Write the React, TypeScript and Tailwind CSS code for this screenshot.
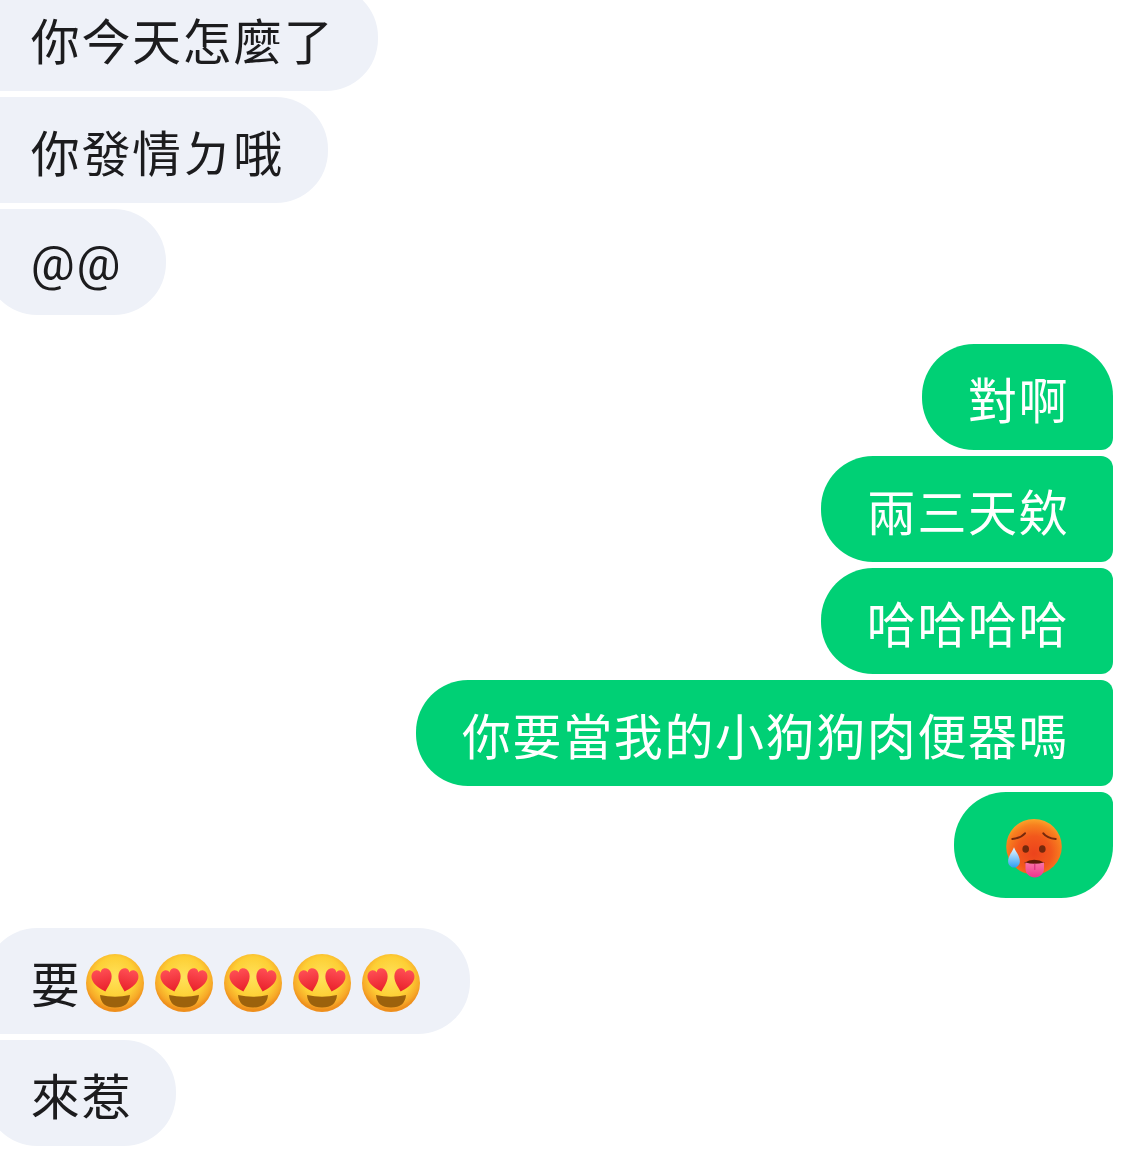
const HEART =
  "M0 10.500C-3 7.500-9 2.500-9-3.500C-9-7.500-6.200-9.800-3.500-9.800C-2-9.800-.5-8.800 0-6.800C.5-8.800 2-9.800 3.500-9.800C6.200-9.800 9-7.500 9-3.500C9 2.500 3 7.500 0 10.500Z";

const HeartEyes = ({ id }: { id: string }) => (
  <svg viewBox="0 0 60 60" className="w-[60px] h-[60px] shrink-0 -mt-[8px] -ml-[2px]">
    <defs>
      <radialGradient id={`face-${id}`} cx="50%" cy="40%" r="56%">
        <stop offset="0%" stopColor="#ffe25a" />
        <stop offset="62%" stopColor="#fdcf35" />
        <stop offset="88%" stopColor="#f7a928" />
        <stop offset="100%" stopColor="#ee8f1c" />
      </radialGradient>
      <linearGradient id={`heart-${id}`} x1="0" y1="0" x2="0" y2="1">
        <stop offset="0%" stopColor="#ff4f55" />
        <stop offset="100%" stopColor="#e8202a" />
      </linearGradient>
    </defs>
    <circle cx="30" cy="30" r="29" fill={`url(#face-${id})`} />
    <path d={HEART} transform="translate(17.500 27) rotate(-14) scale(1.120)" fill={`url(#heart-${id})`} />
    <path d={HEART} transform="translate(42.500 27) rotate(14) scale(1.120)" fill={`url(#heart-${id})`} />
    <path d="M15 42Q30 45.500 45 42Q44 54.500 30 54.500Q16 54.500 15 42Z" fill="#9c620c" />
  </svg>
);

const HotFace = () => (
  <svg viewBox="0 0 60 60" className="w-[60px] h-[60px] shrink-0 -mt-[5px] -ml-[2px]">
    <defs>
      <radialGradient id="hot-face" cx="50%" cy="62%" r="62%">
        <stop offset="0%" stopColor="#ec431c" />
        <stop offset="50%" stopColor="#f2581c" />
        <stop offset="82%" stopColor="#f7801f" />
        <stop offset="100%" stopColor="#fba42a" />
      </radialGradient>
      <linearGradient id="hot-drop" x1="0" y1="0" x2="0" y2="1">
        <stop offset="0%" stopColor="#eefaff" />
        <stop offset="100%" stopColor="#2f9df2" />
      </linearGradient>
      <linearGradient id="hot-tongue" x1="0" y1="0" x2="0" y2="1">
        <stop offset="0%" stopColor="#f873a6" />
        <stop offset="100%" stopColor="#f0358e" />
      </linearGradient>
    </defs>
    <circle cx="30" cy="28.700" r="27.800" fill="url(#hot-face)" />
    <path d="M8.300 21Q17 20 21 15.300" fill="none" stroke="#74280c" strokeWidth="2" strokeLinecap="round" />
    <path d="M51.700 21Q43 20 39.300 15.300" fill="none" stroke="#74280c" strokeWidth="2" strokeLinecap="round" />
    <ellipse cx="21.700" cy="31" rx="3.300" ry="3.800" fill="#74280c" />
    <ellipse cx="38.300" cy="31" rx="3.300" ry="3.800" fill="#74280c" />
    <path d="M20 45Q30 38.500 41 45Q30 47.500 20 45Z" fill="#5e1a08" />
    <path d="M21.500 44.600Q30 47 40 44.600V50.500C40 55.800 35.800 59.500 30.800 59.500S21.500 55.800 21.500 50.500Z" fill="url(#hot-tongue)" />
    <path d="M30.800 46V51.500" stroke="#d02a78" strokeWidth="1" strokeLinecap="round" />
    <path d="M10 29.300C11.500 33.500 15.900 38 15.900 43.500C15.900 47 13 49.600 10 49.600S4.100 47 4.100 43.500C4.100 38 8.500 33.500 10 29.300Z" fill="url(#hot-drop)" />
  </svg>
);

const bubble =
  "h-[105.5px] flex items-center pt-[12px] text-[49px] tracking-[1.6px] font-normal pl-[45.800px] pr-[43.800px] whitespace-nowrap font-['Roboto','Noto_Sans_CJK_TC',sans-serif]";
const left = "self-start -ml-[15px] bg-[#eef1f8] text-[#1c1c1e]";
const right = "self-end mr-4 bg-[#00d075] text-white";

export default function App() {
  return (
    <div className="w-full h-[1167px] overflow-hidden bg-white flex flex-col">
      {/* Incoming, cut off by the top of the screen */}
      <div className="flex flex-col gap-[6.500px] -mt-[15px]">
        <div className={`${bubble} ${left} rounded-l-[12px] rounded-r-[52px]`}>你今天怎麼了</div>
        <div className={`${bubble} ${left} rounded-l-[12px] rounded-r-[52px]`}>你發情ㄉ哦</div>
        <div className={`${bubble} ${left} rounded-tl-[12px] rounded-bl-[52px] rounded-r-[52px]`}>
          <span className="-mt-[9px]">@@</span>
        </div>
      </div>

      {/* Outgoing */}
      <div className="flex flex-col gap-[6.500px] mt-[29.500px]">
        <div className={`${bubble} ${right} rounded-l-[52px] rounded-tr-[52px] rounded-br-[12px]`}>對啊</div>
        <div className={`${bubble} ${right} rounded-l-[52px] rounded-r-[12px]`}>兩三天欸</div>
        <div className={`${bubble} ${right} rounded-l-[52px] rounded-r-[12px]`}>哈哈哈哈</div>
        <div className={`${bubble} ${right} rounded-l-[52px] rounded-r-[12px]`}>你要當我的小狗狗肉便器嗎</div>
        <div className={`${bubble} ${right} rounded-l-[52px] rounded-tr-[12px] rounded-br-[52px]`}>
          <span className="w-[69px] flex justify-center"><HotFace /></span>
        </div>
      </div>

      {/* Incoming again */}
      <div className="flex flex-col gap-[6.500px] mt-[30.500px]">
        <div className={`${bubble} ${left} rounded-tl-[52px] rounded-bl-[12px] rounded-r-[52px]`}>
          要
          {["a", "b", "c", "d", "e"].map((id) => (
            <span key={id} className="w-[69px] flex justify-center"><HeartEyes id={id} /></span>
          ))}
        </div>
        <div className={`${bubble} ${left} rounded-tl-[12px] rounded-bl-[52px] rounded-r-[52px]`}>來惹</div>
      </div>
    </div>
  );
}
